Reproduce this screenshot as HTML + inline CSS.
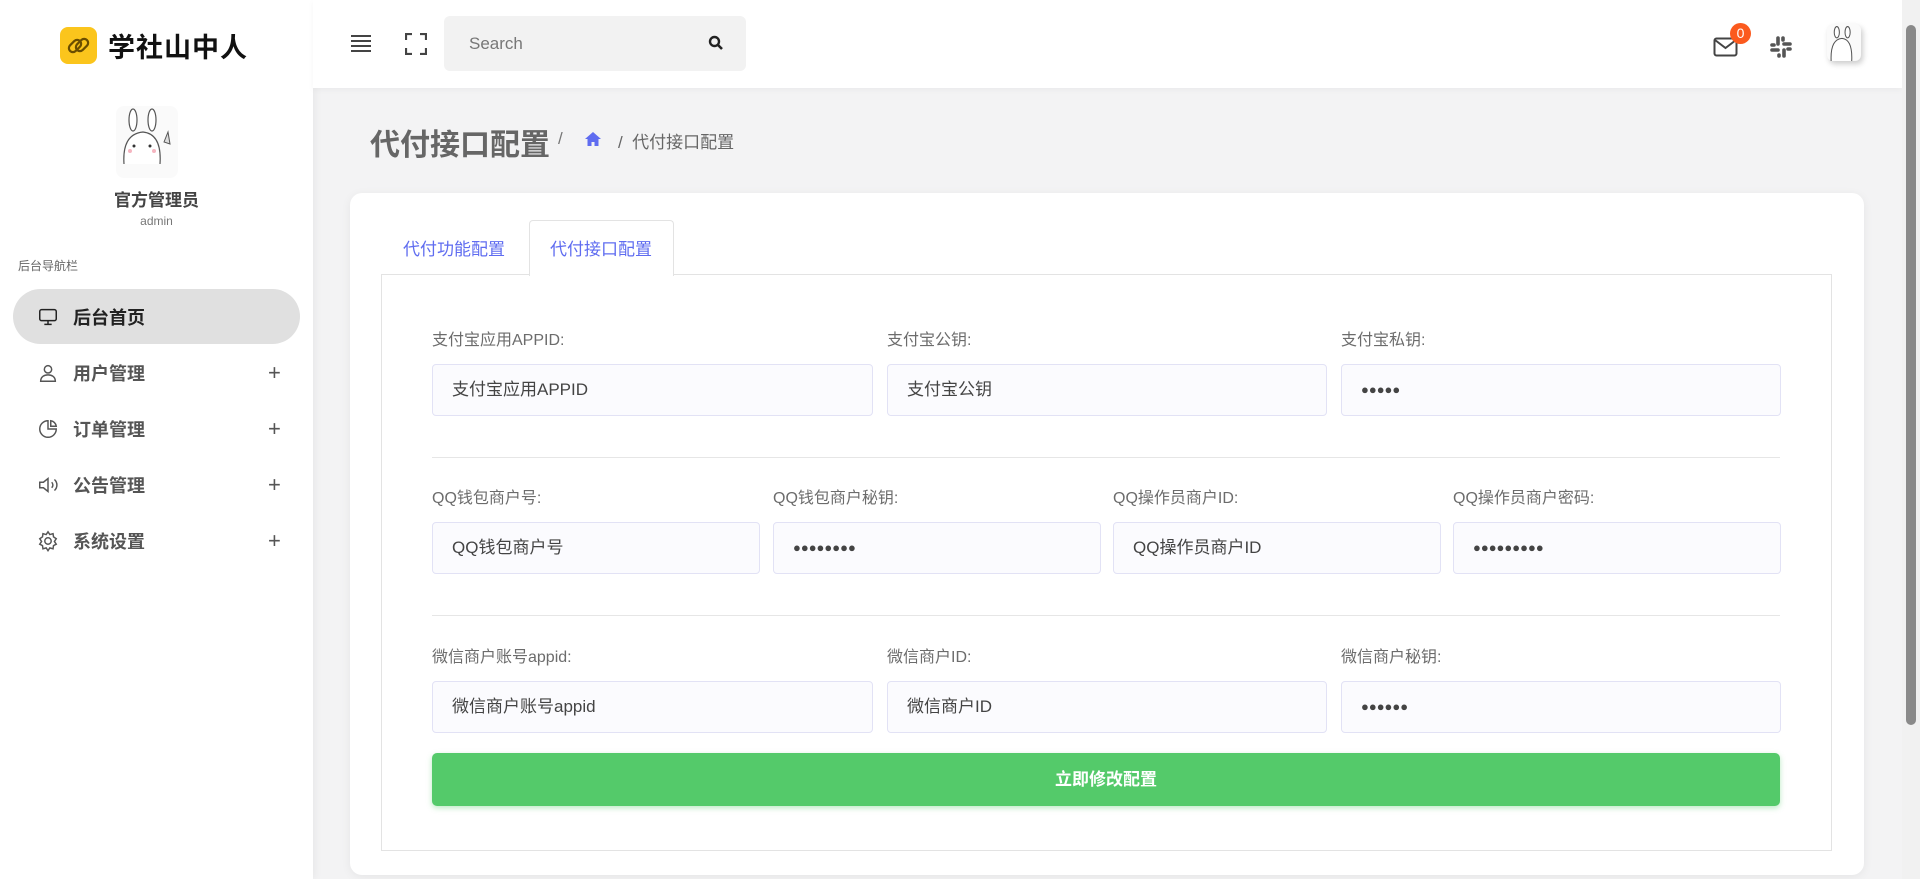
<!DOCTYPE html>
<html><head><meta charset="utf-8"><style>
*{box-sizing:border-box;margin:0;padding:0}
body{width:1920px;height:879px;overflow:hidden;background:#f3f3f4;font-family:"Liberation Sans","Noto Sans CJK SC",sans-serif;position:relative;color:#555}
.abs{position:absolute}
#side{left:0;top:0;width:313px;height:879px;background:#fff;box-shadow:2px 0 8px rgba(0,0,0,.05)}
#head{left:313px;top:0;width:1589px;height:88px;background:#fff;box-shadow:0 2px 6px rgba(0,0,0,.04)}
.nav{position:absolute;left:13px;width:287px;height:55px;display:flex;align-items:center;padding-left:24px;font-size:18px;font-weight:bold;color:#555}
.nav svg{width:22px;height:22px;margin-right:14px;stroke:#555;fill:none;stroke-width:1.6}
.nav .plus{position:absolute;left:255px;font-size:22px;font-weight:normal;color:#555}
.lbl{position:absolute;font-size:16px;color:#6c6c6c}
.inp{position:absolute;height:52px;background:#fbfbfe;border:1px solid #e2e2f5;border-radius:4px;font-size:17px;color:#444;padding-left:19px;line-height:50px}
.dots{letter-spacing:0;font-size:13px}
.hr{position:absolute;left:432px;width:1348px;height:1px;background:#e6e6e6}
</style></head><body>
<div id="side" class="abs">
  <div class="abs" style="left:60px;top:27px;width:37px;height:37px;border-radius:8px;background:#fbc51c">
    <svg width="37" height="37" viewBox="0 0 37 37"><g fill="none" stroke="#6b4e00" stroke-width="2.2"><rect x="8" y="15" width="14" height="8" rx="4" transform="rotate(-45 15 19)"/><rect x="15" y="14" width="14" height="8" rx="4" transform="rotate(-45 22 18)"/></g></svg>
  </div>
  <div class="abs" style="left:108px;top:26px;font-size:27px;font-weight:bold;color:#111;letter-spacing:1px">学社山中人</div>
  <div class="abs" style="left:116px;top:106px;width:62px;height:72px;border-radius:8px;background:#fafafa">
    <svg width="62" height="72" viewBox="0 0 62 72"><g fill="#fff" stroke="#555" stroke-width="1.2"><ellipse cx="17" cy="14" rx="4" ry="11"/><ellipse cx="36" cy="14" rx="4" ry="11"/><path d="M8 58 Q6 28 27 26 Q46 28 44 58"/></g><circle cx="18" cy="40" r="1.5" fill="#333"/><circle cx="34" cy="40" r="1.5" fill="#333"/><circle cx="14" cy="45" r="2" fill="#f5b5c0"/><circle cx="38" cy="45" r="2" fill="#f5b5c0"/><path d="M48 36 L52 26 L54 38 Z" fill="#ddd" stroke="#555"/></svg>
  </div>
  <div class="abs" style="left:0;width:313px;top:186px;text-align:center;font-size:17px;font-weight:bold;color:#444">官方管理员</div>
  <div class="abs" style="left:0;width:313px;top:214px;text-align:center;font-size:12px;color:#777">admin</div>
  <div class="abs" style="left:18px;top:257px;font-size:12px;color:#666">后台导航栏</div>
  <div class="nav" style="top:289px;background:#e0e0e0;border-radius:28px;color:#222"><svg viewBox="0 0 24 24" style="stroke:#222"><rect x="3" y="4" width="18" height="12" rx="2"/><path d="M12 16v4M8 20h8"/></svg>后台首页</div>
  <div class="nav" style="top:345px"><svg viewBox="0 0 24 24"><circle cx="12" cy="8" r="4"/><path d="M4 21c0-5 4-7 8-7s8 2 8 7z"/></svg>用户管理<span class="plus">+</span></div>
  <div class="nav" style="top:401px"><svg viewBox="0 0 24 24"><path d="M12 3a9 9 0 1 0 9 9h-9z"/><path d="M15 3v6h6a7 7 0 0 0-6-6z"/></svg>订单管理<span class="plus">+</span></div>
  <div class="nav" style="top:457px"><svg viewBox="0 0 24 24"><path d="M3 9h4l5-4v14l-5-4H3z"/><path d="M16 9a4 4 0 0 1 0 6M19 6a8 8 0 0 1 0 12"/></svg>公告管理<span class="plus">+</span></div>
  <div class="nav" style="top:513px"><svg viewBox="0 0 24 24"><circle cx="12" cy="12" r="3.5"/><path d="M12 2l2 3 3.5-1 .5 3.5 3 2-2 3 2 3-3 1.5-.5 3.5-3.5-1-2 3-2-3-3.5 1-.5-3.5-3-1.5 2-3-2-3 3-2 .5-3.5 3.5 1z"/></svg>系统设置<span class="plus">+</span></div>
</div>
<div id="head" class="abs">
  <svg class="abs" style="left:37px;top:34px" width="22" height="18" viewBox="0 0 22 18"><g stroke="#444" stroke-width="2"><path d="M1 2h20M1 7h20M1 12h20M1 17h20"/></g></svg>
  <svg class="abs" style="left:92px;top:33px" width="22" height="22" viewBox="0 0 22 22"><g stroke="#444" stroke-width="2.2" fill="none"><path d="M1 7V1h6M15 1h6v6M21 15v6h-6M7 21H1v-6"/></g></svg>
  <div class="abs" style="left:131px;top:16px;width:302px;height:55px;background:#f2f2f2;border-radius:6px"></div>
  <div class="abs" style="left:156px;top:34px;font-size:17px;color:#777">Search</div>
  <svg class="abs" style="left:395px;top:35px" width="16" height="16" viewBox="0 0 16 16"><circle cx="6.5" cy="6.5" r="4.5" stroke="#222" stroke-width="2.4" fill="none"/><path d="M10 10l4 4" stroke="#222" stroke-width="2.6"/></svg>
  <svg class="abs" style="left:1400px;top:37px" width="26" height="20" viewBox="0 0 26 20"><rect x="1.5" y="1.5" width="22" height="17" rx="2" stroke="#444" stroke-width="2" fill="none"/><path d="M2 3l10.5 8L23 3" stroke="#444" stroke-width="2" fill="none"/></svg>
  <div class="abs" style="left:1417px;top:23px;width:21px;height:21px;border-radius:50%;background:#fb5a1e;color:#fff;font-size:14px;text-align:center;line-height:21px">0</div>
  <svg class="abs" style="left:1456px;top:35px" width="24" height="24" viewBox="0 0 24 24"><g stroke="#555" stroke-width="3.6" stroke-linecap="round"><path d="M9 3v6M15 15v6M3 15h6M15 9h6"/><path d="M3 10h2M19 14h2M10 21v-1M14 3v2"/></g></svg>
  <div class="abs" style="left:1514px;top:24px;width:34px;height:37px;border-radius:6px;background:#fafafa;box-shadow:2px 3px 6px rgba(0,0,0,.2)">
    <svg width="34" height="37" viewBox="0 0 62 72"><g fill="#fff" stroke="#555" stroke-width="2"><ellipse cx="17" cy="16" rx="5" ry="11"/><ellipse cx="38" cy="16" rx="5" ry="11"/><path d="M6 72 Q4 30 27 28 Q48 30 46 72"/></g></svg>
  </div>
</div>
<div class="abs" style="left:1902px;top:0;width:18px;height:879px;background:#f1f1f1"><div style="position:absolute;left:4px;top:25px;width:10px;height:700px;background:#8a8a8a;border-radius:5px"></div></div>
<div class="abs" style="left:370px;top:120px;font-size:30px;font-weight:bold;color:#666">代付接口配置</div>
<div class="abs" style="left:558px;top:129px;font-size:17px;color:#777">/</div>
<svg class="abs" style="left:584px;top:131px" width="18" height="16" viewBox="0 0 18 16"><path d="M9 1L1 8h2.5v7h4v-4h3v4h4V8H17z" fill="#5f6cf0"/></svg>
<div class="abs" style="left:618px;top:128px;font-size:17px;color:#666">/&nbsp;&nbsp;代付接口配置</div>
<div class="abs" style="left:350px;top:193px;width:1514px;height:682px;background:#fff;border-radius:12px;box-shadow:0 2px 10px rgba(0,0,0,.06)"></div>
<div class="abs" style="left:403px;top:235px;font-size:17px;color:#5f6cf0">代付功能配置</div>
<div class="abs" style="left:529px;top:220px;width:145px;height:56px;background:#fff;border:1px solid #e3e3e3;border-bottom:none;border-radius:4px 4px 0 0;z-index:2"></div>
<div class="abs" style="left:550px;top:235px;font-size:17px;color:#5f6cf0;z-index:3">代付接口配置</div>
<div class="abs" style="left:381px;top:274px;width:1451px;height:577px;border:1px solid #e3e3e3"></div>

<div class="lbl" style="left:432px;top:326px">支付宝应用APPID:</div>
<div class="lbl" style="left:887px;top:326px">支付宝公钥:</div>
<div class="lbl" style="left:1341px;top:326px">支付宝私钥:</div>
<div class="inp" style="left:432px;top:364px;width:441px">支付宝应用APPID</div>
<div class="inp" style="left:887px;top:364px;width:440px">支付宝公钥</div>
<div class="inp dots" style="left:1341px;top:364px;width:440px">●●●●●</div>
<div class="hr" style="top:457px"></div>

<div class="lbl" style="left:432px;top:484px">QQ钱包商户号:</div>
<div class="lbl" style="left:773px;top:484px">QQ钱包商户秘钥:</div>
<div class="lbl" style="left:1113px;top:484px">QQ操作员商户ID:</div>
<div class="lbl" style="left:1453px;top:484px">QQ操作员商户密码:</div>
<div class="inp" style="left:432px;top:522px;width:328px">QQ钱包商户号</div>
<div class="inp dots" style="left:773px;top:522px;width:328px">●●●●●●●●</div>
<div class="inp" style="left:1113px;top:522px;width:328px">QQ操作员商户ID</div>
<div class="inp dots" style="left:1453px;top:522px;width:328px">●●●●●●●●●</div>
<div class="hr" style="top:615px"></div>

<div class="lbl" style="left:432px;top:643px">微信商户账号appid:</div>
<div class="lbl" style="left:887px;top:643px">微信商户ID:</div>
<div class="lbl" style="left:1341px;top:643px">微信商户秘钥:</div>
<div class="inp" style="left:432px;top:681px;width:441px">微信商户账号appid</div>
<div class="inp" style="left:887px;top:681px;width:440px">微信商户ID</div>
<div class="inp dots" style="left:1341px;top:681px;width:440px">●●●●●●</div>

<div class="abs" style="left:432px;top:753px;width:1348px;height:53px;background:#54ca6a;border-radius:5px;box-shadow:0 2px 6px rgba(84,202,106,.4);color:#fff;font-size:17px;font-weight:bold;text-align:center;line-height:53px">立即修改配置</div>
</body></html>
